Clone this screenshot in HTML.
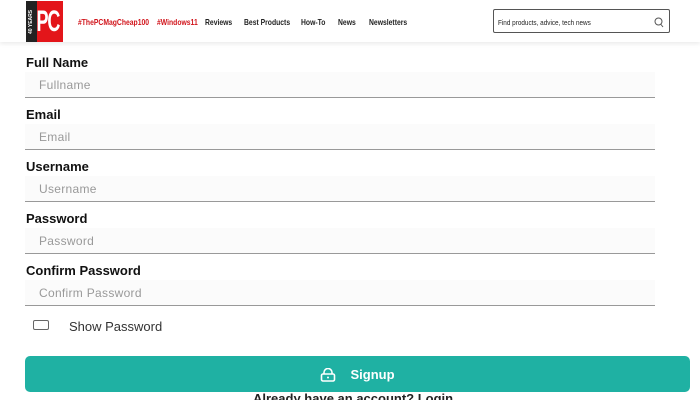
<!DOCTYPE html>
<html style="width:700px;height:400px;overflow:hidden"><head><meta charset="utf-8"><style>
*{margin:0;padding:0;box-sizing:border-box}
body{width:700px;height:400px;overflow:hidden;background:#fff;font-family:"Liberation Sans",Arial,sans-serif;position:relative}
.hdr{position:absolute;left:0;top:0;width:700px;height:42px;background:#fff;box-shadow:0 2px 4px rgba(0,0,0,.08)}
.logo{position:absolute;left:26px;top:1px;height:41px;width:37px;display:flex;overflow:hidden}
.logo .b{width:11px;background:#222;color:#fff;font-size:5px;writing-mode:vertical-rl;transform:rotate(180deg);text-align:center;font-weight:bold;line-height:11px}
.logo .r{width:26px;background:#e3151a;color:#fff;font-weight:bold;font-size:30px;line-height:41px;text-align:center;overflow:hidden}
.logo .r span{display:inline-block;transform:scaleX(.6);letter-spacing:-2px;margin-left:-8px}
.nav{position:absolute;top:17px;font-size:8.5px;font-weight:bold;font-family:"Liberation Sans Narrow","Liberation Sans",sans-serif;color:#222;transform:scaleX(.8);transform-origin:left;white-space:nowrap}
.red{color:#d1141b}
.search{position:absolute;left:493px;top:9px;width:177px;height:24px;border:1px solid #555;border-radius:2px;font-size:7.5px;padding:8px 4px;color:#222}
.lbl{position:absolute;left:26px;font-weight:bold;font-size:13px;color:#111}
.inp{position:absolute;left:25px;width:630px;height:26px;background:#fbfbfb;border-bottom:1.5px solid #999;font-size:12px;color:#999;padding:6px 14px;letter-spacing:.3px}
.cb{position:absolute;left:33px;top:320px;width:16px;height:10px;border:1.3px solid #666;border-radius:2px}
.btn{position:absolute;left:25px;top:356px;width:665px;height:36px;background:#1fb1a3;border-radius:5px;color:#fff;font-weight:bold;font-size:13px;text-align:center;line-height:38px}
</style></head><body>
<div class="hdr">
<div class="logo"><div class="b">40 YEARS</div><div class="r"><span>PC</span></div></div>
<div class="nav red" style="left:78px">#ThePCMagCheap100</div>
<div class="nav red" style="left:157px">#Windows11</div>
<div class="nav" style="left:205px">Reviews</div>
<div class="nav" style="left:244px">Best Products</div>
<div class="nav" style="left:301px">How-To</div>
<div class="nav" style="left:338px">News</div>
<div class="nav" style="left:369px">Newsletters</div>
<div class="search"><span style="display:inline-block;transform:scaleX(.85);transform-origin:left">Find products, advice, tech news</span>
<svg style="position:absolute;right:5px;top:7px" width="10" height="11" viewBox="0 0 10 11"><circle cx="4.5" cy="4.5" r="3.5" fill="none" stroke="#555" stroke-width="1"/><path d="M7 7.5L9 10" stroke="#555" stroke-width="1"/></svg></div>
</div>
<div class="lbl" style="top:55px">Full Name</div><div class="inp" style="top:72px">Fullname</div>
<div class="lbl" style="top:107px">Email</div><div class="inp" style="top:124px">Email</div>
<div class="lbl" style="top:159px">Username</div><div class="inp" style="top:176px">Username</div>
<div class="lbl" style="top:211px">Password</div><div class="inp" style="top:228px">Password</div>
<div class="lbl" style="top:263px">Confirm Password</div><div class="inp" style="top:280px">Confirm Password</div>
<div class="cb"></div>
<div style="position:absolute;left:69px;top:319px;font-size:13px;color:#333">Show Password</div>
<div class="btn"><svg style="vertical-align:-3px;margin-right:14px" width="16" height="14" viewBox="0 0 16 14"><path d="M4 6V4.5a4 4 0 0 1 8 0V6" fill="none" stroke="#fff" stroke-width="1.6"/><rect x="1.5" y="6" width="13" height="7" rx="1.5" fill="none" stroke="#fff" stroke-width="1.6"/><circle cx="8" cy="9.5" r="1" fill="#fff"/></svg>Signup</div>
<div style="position:absolute;left:253px;top:391px;font-size:13px;color:#222;font-weight:bold">Already have an account? Login</div>
</body></html>
